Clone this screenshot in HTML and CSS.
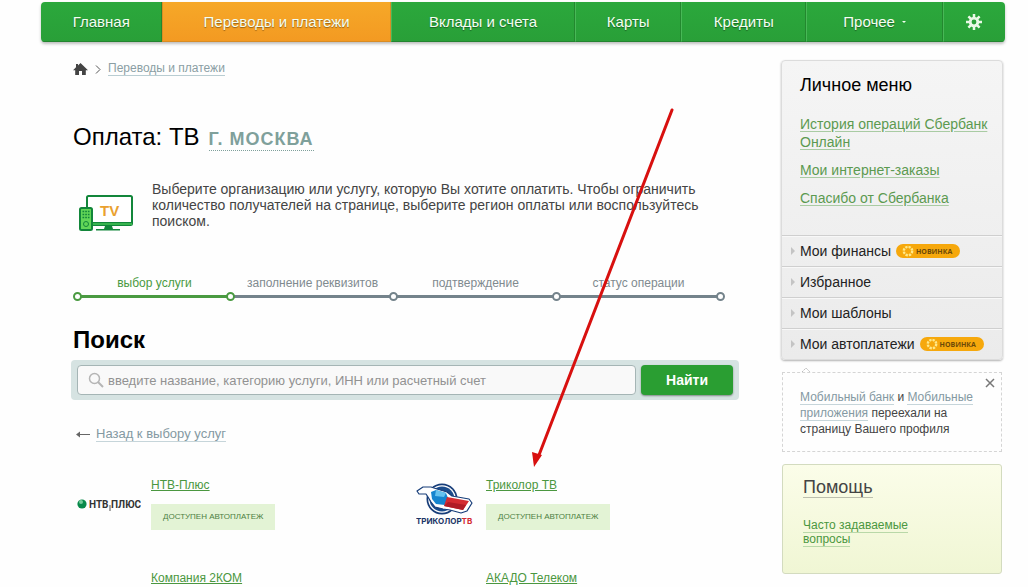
FILE: index.html
```html
<!DOCTYPE html>
<html lang="ru">
<head>
    <meta charset="UTF-8">
    <meta name="viewport" content="width=device-width, initial-scale=1.0">
    <title>Оплата: ТВ</title>
    <link rel="stylesheet" href="styles.css">
</head>
<body>

    <nav class="main-menu">
        <a href="#" class="w-home">Главная</a>
        <a href="#" class="w-payments active">Переводы и платежи</a>
        <a href="#" class="w-deposits">Вклады и счета</a>
        <a href="#" class="w-cards">Карты</a>
        <a href="#" class="w-credits">Кредиты</a>
        <a href="#" class="w-other">Прочее <span class="caret"></span></a>
        <a href="#" class="w-settings" aria-label="Настройки">
            <svg width="16" height="16" viewBox="0 0 16 16">
                <g stroke="#e9f8e6" stroke-width="2.500">
                    <path d="M8 0v16M0 8h16M2.400 2.400l11.200 11.200M13.600 2.400L2.400 13.600"/>
                </g>
                <circle cx="8" cy="8" r="5.200" fill="#e9f8e6"/>
                <circle cx="8" cy="8" r="2.400" fill="#2a9f38"/>
            </svg>
        </a>
    </nav>

    <div class="page">
        <main class="content">
            <div class="breadcrumbs">
                <a href="#" class="home" aria-label="Главная">
                    <svg width="15" height="12" viewBox="0 0 15 12"><path d="M7.500 0L15 7.200H12.800V12H9V8H6v4H2.200V7.200H0L3 4.300V1h2v1.400z" fill="#444"/></svg>
                </a>
                <svg width="6" height="9" viewBox="0 0 6 9"><path d="M1 .5l4 4-4 4" fill="none" stroke="#555"/></svg>
                <a href="#" class="crumb">Переводы и платежи</a>
            </div>

            <div class="title">
                <h1>Оплата: ТВ</h1>
                <a href="#" class="region">Г. МОСКВА</a>
            </div>

            <div class="intro">
                <svg width="54" height="36" viewBox="0 0 54 36">
                    <rect x="8" y="1" width="45" height="29" rx="1.500" fill="#fff" stroke="#12863a" stroke-width="2"/>
                    <path d="M8 27h45v3H8z" fill="#38b44e"/>
                    <path d="M8 27.500h45" stroke="#12863a"/>
                    <path d="M26 31h7l1 3h7v1.500H17V34h8z" fill="#12863a"/>
                    <text x="21" y="21" class="tv-text">TV</text>
                    <rect x="1" y="13" width="12" height="22" rx="1.500" fill="#62d657" stroke="#12863a" stroke-width="2"/>
                    <path d="M3.500 16.500h7M3.500 19.500h7M3.500 22.500h7" stroke="#12863a" stroke-width="1.500" stroke-dasharray="1.700 1"/>
                    <circle cx="7" cy="29" r="2.500" fill="none" stroke="#12863a"/>
                </svg>
                <p>Выберите организацию или услугу, которую Вы хотите оплатить. Чтобы ограничить количество получателей на странице, выберите регион оплаты или воспользуйтесь поиском.</p>
            </div>

            <ol class="steps">
                <li class="current">выбор услуги</li>
                <li>заполнение реквизитов</li>
                <li>подтверждение</li>
                <li>статус операции</li>
            </ol>

            <h2>Поиск</h2>
            <form class="search">
                <label class="search-field">
                    <svg width="16" height="16" viewBox="0 0 16 16" fill="none" stroke="#b5b5b5" stroke-width="1.500"><circle cx="6.500" cy="6.500" r="5"/><path d="M10 10l5 5" stroke-width="2"/></svg>
                    <input type="text" aria-label="Поиск" placeholder="введите название, категорию услуги, ИНН или расчетный счет">
                </label>
                <button type="button">Найти</button>
            </form>

            <div class="back">
                <svg width="14" height="7" viewBox="0 0 14 7"><path d="M1 3.500h13" stroke="#666"/><path d="M0 3.500L4 .5v6z" fill="#666"/></svg>
                <a href="#">Назад к выбору услуг</a>
            </div>

            <div class="providers">
                <div class="provider">
                    <div class="logo">
                        <svg width="64" height="18" viewBox="0 0 64 18">
                            <circle cx="5" cy="9" r="4.600" fill="#098a4b"/>
                            <circle cx="4" cy="7" r="2" fill="#74cc9b"/>
                            <text x="12" y="13" class="ntv-text">НТВ</text>
                            <path d="M33 10v6" stroke="#555"/>
                            <text x="34" y="13" class="ntv-text">ПЛЮС</text>
                        </svg>
                    </div>
                    <div class="info">
                        <a href="#">НТВ-Плюс</a>
                        <span class="autopay">ДОСТУПЕН АВТОПЛАТЕЖ</span>
                    </div>
                </div>
                <div class="provider">
                    <div class="logo">
                        <svg width="57" height="42" viewBox="0 0 57 42">
                            <circle cx="26" cy="16" r="15.500" fill="#173d79"/>
                            <circle cx="26" cy="16" r="13.800" fill="#fff"/>
                            <circle cx="26" cy="16" r="12.500" fill="#1b4c8c"/>
                            <path d="M1 8l6-4h8l6 2 10 3 5 4 17 3 3 4-5 8-6 2-11-3-7-1-8-2-4-5-3-5-2-3H3z" fill="#fff" stroke="#173d79" stroke-width="1.200" stroke-linejoin="round"/>
                            <path d="M15 9l5-2 10 3 2 5-3 7-9-1-4-5z" fill="#1585cf"/>
                            <path d="M20 7l10 3-2 4-9-1z" fill="#65c2ef"/>
                            <path d="M31 14l22 4-6 9-19-4z" fill="#d42b31"/>
                            <path d="M28 23l4-4 18 3-3 5z" fill="#b01c26"/>
                            <text x="0" y="41" class="tricolor-text">ТРИКОЛОР<tspan class="tricolor-tv">ТВ</tspan></text>
                        </svg>
                    </div>
                    <div class="info">
                        <a href="#">Триколор ТВ</a>
                        <span class="autopay">ДОСТУПЕН АВТОПЛАТЕЖ</span>
                    </div>
                </div>
                <div class="provider">
                    <div class="logo"></div>
                    <div class="info"><a href="#">Компания 2КОМ</a></div>
                </div>
                <div class="provider">
                    <div class="logo"></div>
                    <div class="info"><a href="#">АКАДО Телеком</a></div>
                </div>
            </div>
        </main>

        <aside class="sidebar">
            <div class="personal-menu">
                <div class="personal-links">
                    <h3>Личное меню</h3>
                    <a href="#">История операций Сбербанк Онлайн</a>
                    <a href="#">Мои интернет-заказы</a>
                    <a href="#">Спасибо от Сбербанка</a>
                </div>
                <ul>
                    <li><a href="#">Мои финансы</a>
                        <span class="new"><svg width="12" height="12" viewBox="0 0 12 12"><circle cx="6" cy="6" r="4.200" fill="none" stroke="#ffe98a" stroke-width="2.400" stroke-dasharray="2.300 1"/></svg>НОВИНКА</span></li>
                    <li><a href="#">Избранное</a></li>
                    <li><a href="#">Мои шаблоны</a></li>
                    <li><a href="#">Мои автоплатежи</a>
                        <span class="new"><svg width="12" height="12" viewBox="0 0 12 12"><circle cx="6" cy="6" r="4.200" fill="none" stroke="#ffe98a" stroke-width="2.400" stroke-dasharray="2.300 1"/></svg>НОВИНКА</span></li>
                </ul>
            </div>

            <div class="notice">
                <svg class="notice-tip" width="10" height="6" viewBox="0 0 10 6"><path d="M1 5l4-4 4 4" fill="#fff" stroke="#bbb" stroke-dasharray="2 1"/></svg>
                <button type="button" class="close" aria-label="Закрыть">
                    <svg width="10" height="10" viewBox="0 0 10 10"><path d="M1 1l8 8M9 1L1 9" stroke="#777" stroke-width="1.500"/></svg>
                </button>
                <p><a href="#">Мобильный банк</a> и <a href="#">Мобильные приложения</a> переехали на страницу Вашего профиля</p>
            </div>

            <div class="help">
                <h3><a href="#">Помощь</a></h3>
                <p><a href="#">Часто задаваемые вопросы</a></p>
            </div>
        </aside>
    </div>

    <!-- Указатель на Триколор ТВ -->
    <svg class="pointer" width="144" height="362" viewBox="0 0 144 362">
        <path d="M141 3L8 348" stroke="#d8100f" stroke-width="3" stroke-linecap="round"/>
        <path d="M3 360L1 345l10 3z" fill="#d8100f"/>
    </svg>

</body>
</html>
```
FILE: styles.css
```css
body {
    font-family: 'Liberation Sans', Arial, sans-serif;
    margin: 0;
    padding: 2px 23px 0 41px;
    background-color: #fefefe;
    color: #444;
    position: relative;
}

h1, h2, h3, p, ul, ol {
    margin: 0;
    padding: 0;
}

ul, ol {
    list-style: none;
}

svg {
    display: block;
    flex: none;
}

/* Главное меню */
.main-menu {
    display: flex;
    height: 40px;
    border-radius: 4px;
    overflow: hidden;
    background: linear-gradient(#2ba83c, #299f38);
    box-shadow: 0 2px 3px rgba(0,0,0,0.25);
}

.main-menu a {
    display: flex;
    align-items: center;
    justify-content: center;
    box-sizing: border-box;
    color: #f4fff2;
    font-size: 15px;
    text-decoration: none;
    white-space: nowrap;
    text-shadow: 0 1px 1px rgba(0,0,0,0.4);
    border-right: 1px solid #23882f;
    border-bottom: 1px solid #238530;
}

.main-menu a + a {
    border-left: 1px solid #48b857;
}

.main-menu a:last-child {
    border-right: none;
}

.main-menu a.active {
    background: linear-gradient(#f6a828, #f39a22);
    border-color: #d98c24;
}

.main-menu .w-home { flex: 122 1 0; }
.main-menu .w-payments { flex: 229 1 0; }
.main-menu .w-deposits { flex: 185 1 0; }
.main-menu .w-cards { flex: 105 1 0; }
.main-menu .w-credits { flex: 125 1 0; }
.main-menu .w-other { flex: 136 1 0; }
.main-menu .w-settings { flex: 62 1 0; }

.caret {
    margin-left: 7px;
    border: 2px solid transparent;
    border-top-color: #f4fff2;
    border-bottom: none;
}

.page {
    display: flex;
    justify-content: space-between;
    gap: 42px;
    padding: 18px 2px 0 30px;
}

.content {
    flex: 1;
    min-width: 0;
}

.breadcrumbs {
    display: flex;
    align-items: center;
    gap: 7px;
    height: 16px;
    padding: 1px 0 0 2px;
}

.crumb {
    color: #8b9ea4;
    font-size: 12px;
    line-height: 13px;
    text-decoration: none;
    border-bottom: 1px solid #b9cdd2;
}

.title {
    display: flex;
    align-items: baseline;
    gap: 9px;
    margin-top: 45px;
    padding-left: 2px;
}

.title h1 {
    color: #000;
    font-size: 24px;
    font-weight: normal;
    line-height: 30px;
}

.region {
    color: #7fa09b;
    font-size: 18px;
    font-weight: bold;
    letter-spacing: 1px;
    text-decoration: none;
    border-bottom: 1px dotted #7fa09b;
}

.intro {
    display: flex;
    gap: 19px;
    margin-top: 29px;
    padding: 0 32px 0 8px;
}

.intro svg {
    margin-top: 14px;
}

.intro p {
    font-size: 14px;
    line-height: 16px;
}

.tv-text {
    fill: #eaa12f;
    font-size: 15px;
    font-weight: bold;
}

/* Шаги оплаты */
.steps {
    display: flex;
    margin: 44px 19px 0 7px;
}

.steps li {
    position: relative;
    flex: 163 1 0;
    padding-bottom: 4px;
    border-bottom: 3px solid #74838b;
    color: #808a8f;
    font-size: 12px;
    line-height: 16px;
    text-align: center;
}

.steps li.current {
    flex-grow: 153;
    color: #4a9a41;
    border-color: #4a9a41;
}

.steps li::before,
.steps li:last-child::after {
    content: "";
    position: absolute;
    left: -5px;
    bottom: -6px;
    width: 5px;
    height: 5px;
    border: 2px solid #74838b;
    border-radius: 50%;
    background-color: #fff;
}

.steps li:last-child::after {
    left: auto;
    right: -5px;
}

.steps li.current::before,
.steps li.current + li::before {
    border-color: #4a9a41;
}

h2 {
    margin-top: 27px;
    padding-left: 2px;
    color: #000;
    font-size: 24px;
    line-height: 30px;
}

/* Поиск */
.search {
    display: flex;
    gap: 5px;
    margin-top: 5px;
    padding: 5px 6px;
    border-radius: 4px;
    background-color: #d6e3e2;
}

.search-field {
    display: flex;
    flex: 1;
    align-items: center;
    gap: 4px;
    padding-left: 10px;
    border: 1px solid #a5b5b5;
    border-radius: 4px;
    background-color: #f9f9f9;
}

.search input {
    flex: 1;
    min-width: 0;
    height: 28px;
    padding: 0;
    border: none;
    outline: none;
    background: none;
    font-family: inherit;
    font-size: 13px;
}

.search input::placeholder {
    color: #929292;
    opacity: 1;
}

.search button {
    width: 92px;
    border: none;
    border-radius: 4px;
    background-color: #2a9e32;
    box-shadow: 0 1px 2px rgba(0,0,0,0.4);
    color: #fff;
    font-family: inherit;
    font-size: 14px;
    font-weight: bold;
    cursor: pointer;
}

.back {
    display: flex;
    align-items: center;
    gap: 6px;
    margin-top: 26px;
    padding-left: 5px;
}

.back a {
    color: #8499a2;
    font-size: 13px;
    line-height: 15px;
    text-decoration: none;
    border-bottom: 1px solid #c6d5da;
}

/* Список получателей */
.providers {
    display: grid;
    grid-template-columns: 1fr 1fr;
    column-gap: 2px;
    row-gap: 40px;
    margin-top: 35px;
}

.provider {
    display: flex;
}

.provider .logo {
    display: flex;
    align-items: center;
    justify-content: center;
    width: 76px;
    margin-right: 4px;
}

.provider .info {
    display: flex;
    flex-direction: column;
    align-items: flex-start;
    gap: 11px;
}

.provider a {
    color: #4b9740;
    font-size: 12px;
    line-height: 16px;
}

.autopay {
    padding: 0 12px;
    background-color: #e3f3d5;
    color: #4d7f43;
    font-size: 8px;
    line-height: 26px;
}

.ntv-text {
    fill: #333;
    font-family: 'Roboto', sans-serif;
    font-size: 10px;
    font-weight: bold;
}

.tricolor-text {
    fill: #1b3566;
    font-family: 'Inter', sans-serif;
    font-size: 8px;
    font-weight: bold;
}

.tricolor-tv {
    fill: #d42b31;
}

/* Правая колонка */
.sidebar {
    width: 222px;
    flex: none;
}

.personal-menu {
    border: 1px solid #dcdcdc;
    border-radius: 4px;
    background: linear-gradient(#f5f5f5, #ebebeb);
    box-shadow: 0 1px 2px rgba(0,0,0,0.3);
    box-sizing: border-box;
}

.personal-links {
    display: flex;
    flex-direction: column;
    align-items: flex-start;
    gap: 10px;
    padding: 14px 8px 28px 18px;
}

.personal-links h3 {
    margin-bottom: 10px;
    color: #000;
    font-size: 18px;
    font-weight: normal;
    line-height: 20px;
}

.personal-links a {
    color: #5c9a50;
    font-size: 14px;
    line-height: 18px;
    text-decoration-color: #a9cba3;
    text-underline-offset: 2px;
}

.personal-menu li {
    display: flex;
    align-items: center;
    gap: 5px;
    height: 30px;
    padding-left: 9px;
    border-top: 1px solid #cfcfcf;
    box-shadow: inset 0 1px 0 #f8f8f8;
}

.personal-menu li::before {
    content: "";
    border: 4px solid transparent;
    border-left-color: #c4c4c4;
    border-right: none;
}

.personal-menu li a {
    color: #222;
    font-size: 14px;
    text-decoration: none;
}

.new {
    display: flex;
    align-items: center;
    gap: 2px;
    height: 14px;
    padding: 0 8px 0 6px;
    border-radius: 7px;
    background-color: #f6a80c;
    color: #6d4a08;
    font-family: 'Open Sans', sans-serif;
    font-size: 7px;
    font-weight: bold;
}

.notice {
    position: relative;
    margin: 12px 1px 0 1px;
    padding: 16px 17px 14px 17px;
    border: 1px dashed #d5d5d5;
}

.notice-tip {
    position: absolute;
    top: -6px;
    left: 18px;
}

.notice .close {
    position: absolute;
    top: 5px;
    right: 6px;
    padding: 0;
    border: none;
    background: none;
    cursor: pointer;
}

.notice p {
    font-size: 12px;
    line-height: 16px;
}

.notice a {
    color: #8499a2;
    text-decoration: none;
    border-bottom: 1px solid #c6d5da;
}

.help {
    margin: 12px 1px 0 1px;
    padding: 10px 70px 27px 20px;
    border: 1px solid #d3dbbf;
    border-radius: 3px;
    background: linear-gradient(#fbfde9, #f0f6d4);
}

.help h3 {
    font-size: 18px;
    font-weight: normal;
    line-height: 24px;
}

.help h3 a {
    color: #444;
    text-decoration: none;
    border-bottom: 1px solid #bcbfae;
}

.help p {
    margin-top: 19px;
    font-size: 12px;
    line-height: 14px;
}

.help p a {
    color: #4b9740;
    text-decoration: none;
    border-bottom: 1px solid #b9d8a8;
}

.pointer {
    position: absolute;
    top: 107px;
    left: 531px;
    pointer-events: none;
}
```
